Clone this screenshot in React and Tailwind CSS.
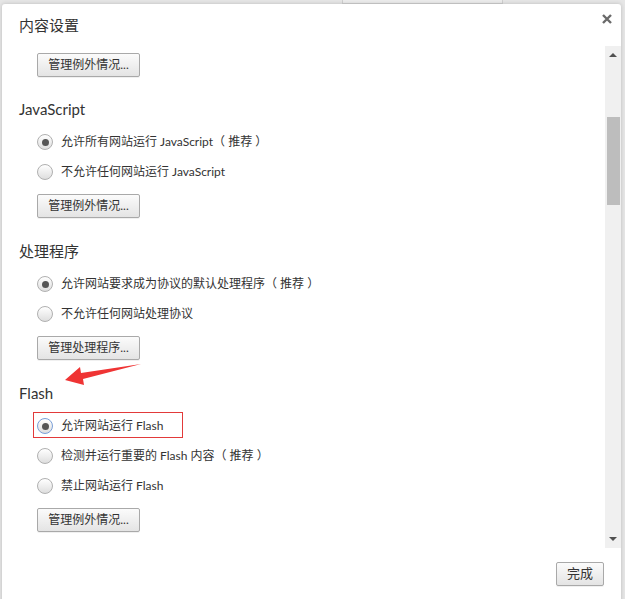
import { useState } from "react";

const font = { fontFamily: '"Lato", "Noto Sans CJK SC", sans-serif' };

function Radio({ checked, focused }) {
  return (
    <span
      className={`flex h-[16px] w-[16px] shrink-0 items-center justify-center rounded-full border bg-gradient-to-b from-[#ffffff] to-[#dedede] ${
        focused ? "border-[#7a9fd8]" : "border-[#b0b0b0]"
      }`}
    >
      {checked ? <span className="h-[7px] w-[7px] rounded-full bg-[#555]" /> : null}
    </span>
  );
}

function Option({ label, checked, focused, marked }) {
  return (
    <div className="relative flex h-[30px] items-center gap-[8px] pl-[35px] text-[12px] text-[#333]">
      <Radio checked={checked} focused={focused} />
      <span>{label}</span>
      {marked ? (
        <span className="absolute left-[31px] top-[1px] h-[26px] w-[150px] border border-[#e23a3a]" />
      ) : null}
    </div>
  );
}

function SmallButton({ children, className = "" }) {
  return (
    <button
      className={`flex h-[24px] items-center justify-center rounded-[2px] border border-[#a9a9a9] bg-gradient-to-b from-[#fbfbfb] to-[#e4e4e4] text-[12px] text-[#333] shadow-[0_1px_0_rgba(0,0,0,0.06)] ${className}`}
    >
      {children}
    </button>
  );
}

function Section({ title, options, button, arrow, first }) {
  return (
    <div className={`relative ${first ? "mt-[22px]" : "mt-[23px]"}`}>
      {arrow ? (
        <svg className="absolute left-[44px] top-[-28px]" width="100" height="30" viewBox="0 0 100 30">
          <polygon points="19,25 34,12 35,18 95,9 37,24 38,30" fill="#ef3434" />
        </svg>
      ) : null}
      <h3 className="pl-[17px] text-[15px] leading-[20px] text-[#333]">{title}</h3>
      <div className="mt-[8px]">
        {options.map((o) => (
          <Option key={o.label} {...o} />
        ))}
      </div>
      <SmallButton className="ml-[35px] mt-[7px] w-[103px]">{button}</SmallButton>
    </div>
  );
}

export default function App() {
  const [sections] = useState([
    {
      title: "JavaScript",
      first: true,
      options: [
        { label: "允许所有网站运行 JavaScript（ 推荐 ）", checked: true },
        { label: "不允许任何网站运行 JavaScript" },
      ],
      button: "管理例外情况...",
    },
    {
      title: "处理程序",
      options: [
        { label: "允许网站要求成为协议的默认处理程序（ 推荐 ）", checked: true },
        { label: "不允许任何网站处理协议" },
      ],
      button: "管理处理程序...",
    },
    {
      title: "Flash",
      arrow: true,
      options: [
        { label: "允许网站运行 Flash", checked: true, focused: true, marked: true },
        { label: "检测并运行重要的 Flash 内容（ 推荐 ）" },
        { label: "禁止网站运行 Flash" },
      ],
      button: "管理例外情况...",
    },
  ]);

  return (
    <div className="relative h-[599px] w-[625px] overflow-hidden bg-[#e6e6e6]" style={font}>
      <div className="absolute left-[342px] top-[-16px] flex h-[20px] w-[161px] items-center border border-[#cfcfcf] bg-[#ececec] pl-[4px] text-[13px] text-[#c4c4c4]">
        在设置中搜索
      </div>

      <div className="absolute left-[2px] top-[4px] flex h-[600px] w-[619px] flex-col rounded-t-[3px] bg-white shadow-[0_0_4px_rgba(0,0,0,0.18)]">
        <div className="flex h-[42px] items-start justify-between pl-[17px] pr-[9px] pt-[11px]">
          <h2 className="text-[15px] leading-[20px] text-[#333]">内容设置</h2>
          <svg className="mt-[-1px]" width="10" height="10" viewBox="0 0 10 10">
            <path d="M1 1 L9 9 M9 1 L1 9" stroke="#6a6a6a" strokeWidth="2.4" />
          </svg>
        </div>

        <div className="flex h-[502px]">
          <div className="flex-1 overflow-hidden pt-[7px]">
            <SmallButton className="ml-[35px] w-[103px]">管理例外情况...</SmallButton>
            {sections.map((s) => (
              <Section key={s.title} {...s} />
            ))}
          </div>
          <div className="flex w-[16px] flex-col items-center bg-[#f0f0f0]">
            <div className="flex h-[18px] items-center">
              <span className="h-0 w-0 border-x-[4px] border-b-[4px] border-x-transparent border-b-[#505050]" />
            </div>
            <div className="ml-[1px] mt-[53px] h-[88px] w-[13px] bg-[#bdbdbd]" />
            <div className="flex-1" />
            <div className="flex h-[18px] items-center">
              <span className="h-0 w-0 border-x-[4px] border-t-[4px] border-x-transparent border-t-[#505050]" />
            </div>
          </div>
        </div>

        <div className="flex justify-end pr-[17px] pt-[14px]">
          <SmallButton className="w-[48px] text-[13px]">完成</SmallButton>
        </div>
      </div>
    </div>
  );
}
